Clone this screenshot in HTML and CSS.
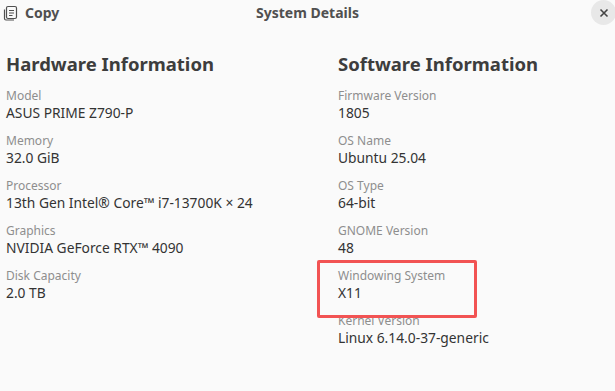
FILE: index.html
```html
<!DOCTYPE html>
<html lang="en">
<head>
  <meta charset="utf-8">
  <title>System Details</title>
  <link rel="stylesheet" href="styles.css">
</head>
<body>
<div class="window">
  <div class="headerbar">
    <div class="copy">
      <svg width="16" height="16" viewBox="0 0 16 16" fill="none" stroke="#505050" stroke-width="1.2">
        <path d="M2.5 4.5v9a1.5 1.5 0 0 0 1.5 1.5h8"/>
        <rect x="4.5" y="1.5" width="10" height="12" rx="1.5"/>
        <path d="M7 5.5h5M7 8h5M7 10.5h3.5"/>
      </svg>
      <span>Copy</span>
    </div>
    <div class="title">System Details</div>
    <div class="close">
      <svg width="10" height="10" viewBox="0 0 10 10" stroke="#444" stroke-width="1.6">
        <path d="M1.5 1.5l7 7M8.5 1.5l-7 7"/>
      </svg>
    </div>
  </div>

  <div class="columns">
    <div class="section">
      <h2>Hardware Information</h2>
      <div class="row"><div class="label">Model</div><div class="value">ASUS PRIME Z790-P</div></div>
      <div class="row"><div class="label">Memory</div><div class="value">32.0 GiB</div></div>
      <div class="row"><div class="label">Processor</div><div class="value">13th Gen Intel® Core™ i7-13700K × 24</div></div>
      <div class="row"><div class="label">Graphics</div><div class="value">NVIDIA GeForce RTX™ 4090</div></div>
      <div class="row"><div class="label">Disk Capacity</div><div class="value">2.0 TB</div></div>
    </div>
    <div class="section">
      <h2>Software Information</h2>
      <div class="row"><div class="label">Firmware Version</div><div class="value">1805</div></div>
      <div class="row"><div class="label">OS Name</div><div class="value">Ubuntu 25.04</div></div>
      <div class="row"><div class="label">OS Type</div><div class="value">64-bit</div></div>
      <div class="row"><div class="label">GNOME Version</div><div class="value">48</div></div>
      <div class="row marked"><div class="label">Windowing System</div><div class="value">X11</div></div>
      <div class="row"><div class="label">Kernel Version</div><div class="value">Linux 6.14.0-37-generic</div></div>
    </div>
  </div>
</div>
</body>
</html>
```

FILE: styles.css
```css
html, body { margin: 0; padding: 0; background: #fafafa; }
body { font-family: "Noto Sans", "DejaVu Sans", sans-serif; color: #333; overflow: hidden; }

.window { width: 615px; height: 391px; }

.headerbar { display: flex; align-items: center; height: 25px; position: relative; }
.copy { display: flex; align-items: center; gap: 7px; padding-left: 2px; font-size: 14px; font-weight: bold; color: #505050; }
.copy svg { margin-top: 1px; }
.title { position: absolute; left: 0; right: 0; text-align: center; font-size: 14px; font-weight: bold; color: #505050; pointer-events: none; }
.close { margin-left: auto; margin-right: -1px; width: 25px; height: 25px; flex: none; border-radius: 50%; background: #e8e8e8; display: flex; align-items: center; justify-content: center; }

.columns { display: grid; grid-template-columns: 332px 1fr; padding: 23px 0 0 6px; }
.section h2 { margin: 3px 0 10px; font-size: 18.5px; font-weight: bold; color: #3d3d3d; line-height: 26px; }

.row { height: 45px; }
.label { font-size: 12px; color: #8e8e8e; line-height: 17px; }
.value { font-size: 13.8px; color: #333; line-height: 18px; }

.marked { position: relative; }
.marked::after { content: ""; position: absolute; left: -21px; top: -7px; width: 154px; height: 52px; border: 3px solid #f25353; border-radius: 2px; }
```
